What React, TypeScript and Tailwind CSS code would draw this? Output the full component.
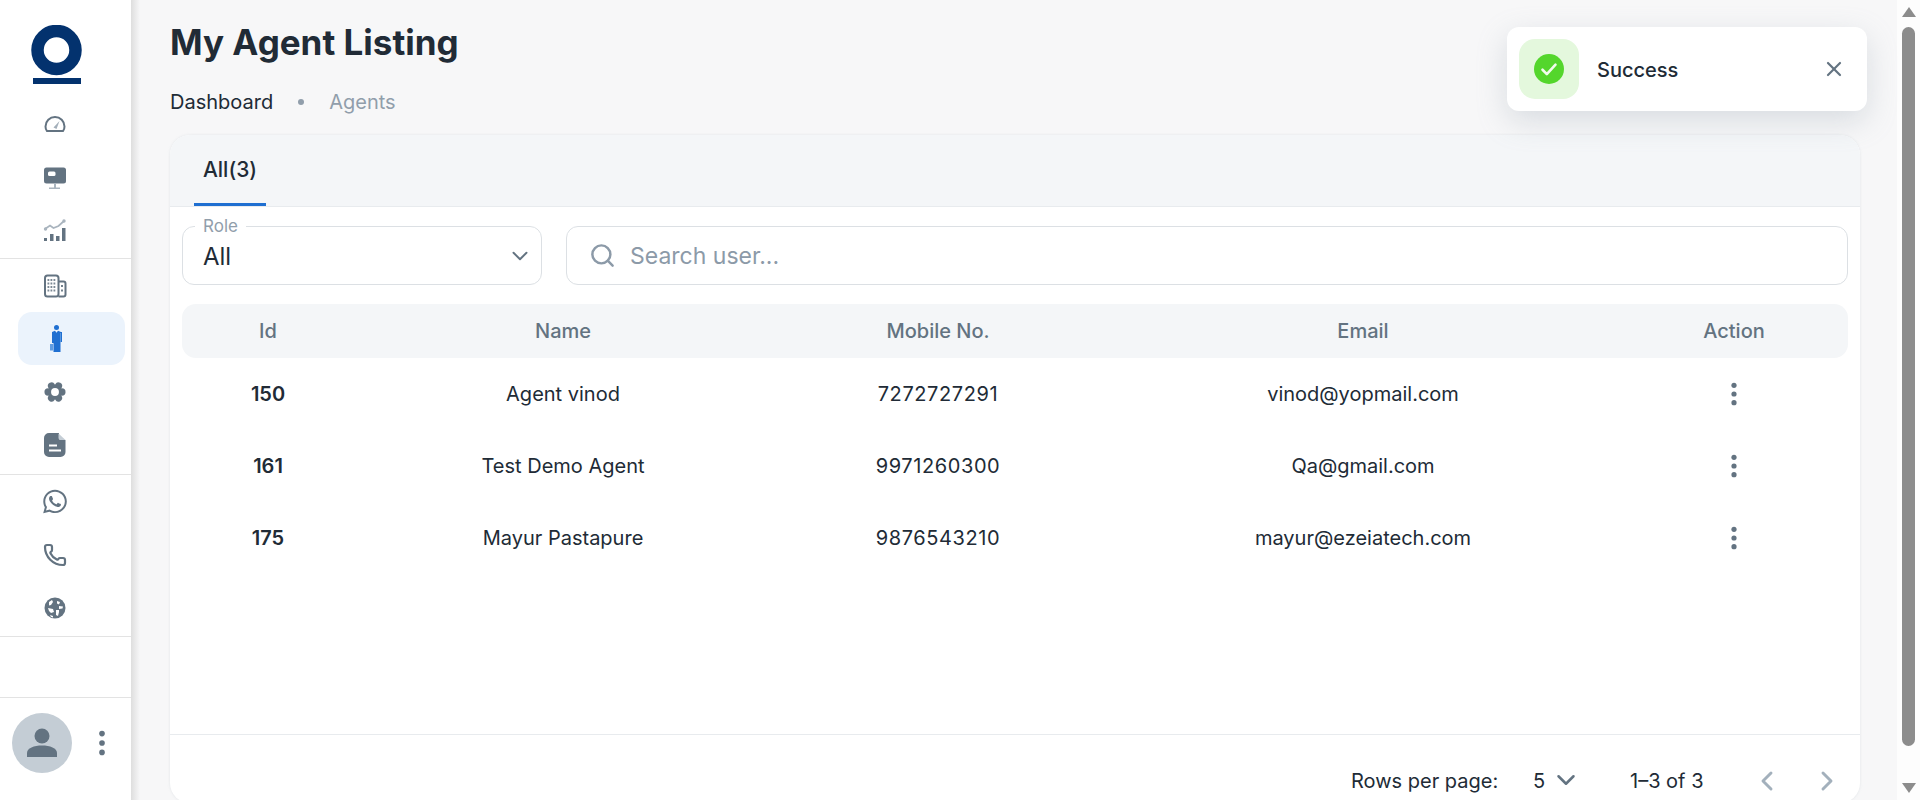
import { ChevronDown, ChevronLeft, ChevronRight, Phone, Search, X } from 'lucide-react'
import { FaWhatsapp } from 'react-icons/fa'

const rows = [
  { id: 150, name: 'Agent vinod', mobile: '7272727291', email: 'vinod@yopmail.com' },
  { id: 161, name: 'Test Demo Agent', mobile: '9971260300', email: 'Qa@gmail.com' },
  { id: 175, name: 'Mayur Pastapure', mobile: '9876543210', email: 'mayur@ezeiatech.com' },
]

function Logo() {
  return (
    <svg width="52" height="60" viewBox="0 0 52 60">
      <circle cx="25.500" cy="25" r="19" fill="none" stroke="#03326e" strokeWidth="12.500" />
      <rect x="2" y="53" width="48" height="6" fill="#03326e" />
    </svg>
  )
}

function Gauge() {
  return (
    <svg width="24" height="24" viewBox="0 0 24 24">
      <path d="M4 19h16c.8-.9 1.500-2.600 1.500-4.500a9.500 9.500 0 0 0-19 0c0 1.900.7 3.600 1.500 4.500z" fill="none" stroke="#637381" strokeWidth="2" strokeLinejoin="round" />
      <path d="M10.500 15.500l6-6.500-3 8z" fill="#a3afba" />
    </svg>
  )
}

function Monitor() {
  return (
    <svg width="24" height="24" viewBox="0 0 24 24">
      <rect x="1" y="2.500" width="22" height="16" rx="2.500" fill="#637381" />
      <rect x="5" y="6.500" width="7.500" height="4.500" rx="1.500" fill="#fff" />
      <path d="M11 18.500h2v4h4V24H6v-1.500h5z" fill="#a9b4be" />
    </svg>
  )
}

function ChartUp() {
  return (
    <svg width="24" height="24" viewBox="0 0 24 24">
      <path d="M2 11l5-3.500 3.500 2.500L15.500 8l6-5.500" fill="none" stroke="#a9b4be" strokeWidth="1.700" />
      <circle cx="2.500" cy="11" r="1.700" fill="#a9b4be" />
      <circle cx="21" cy="3" r="1.700" fill="#a9b4be" />
      <rect x="1" y="20" width="3" height="3" fill="#637381" />
      <rect x="7" y="16" width="3.500" height="7" fill="#637381" />
      <rect x="13" y="18" width="3.500" height="5" fill="#637381" />
      <rect x="19" y="10" width="3.500" height="13" fill="#637381" />
    </svg>
  )
}

function Building() {
  return (
    <svg width="24" height="24" viewBox="0 0 24 24">
      <rect x="2" y="1.500" width="13.500" height="21" rx="2.500" fill="none" stroke="#637381" strokeWidth="2" />
      <path d="M15.500 7.500h5a2 2 0 0 1 2 2v11a2 2 0 0 1-2 2h-5" fill="none" stroke="#637381" strokeWidth="2" />
      <path d="M4.500 6h8.500M4.500 9.500h8.500M4.500 13h8.500M4.500 16.500h8.500" stroke="#7b8894" strokeWidth="1.800" strokeDasharray="1.800 1.200" />
      <path d="M19 11v2M19 15.500v2" stroke="#637381" strokeWidth="1.800" />
    </svg>
  )
}

function AgentIcon() {
  return (
    <svg width="12" height="27" viewBox="0 0 12 27" className="ml-[2px]">
      <circle cx="6.500" cy="2.500" r="2.500" fill="#1f6fd1" />
      <path d="M2 7l3-1.200 1.500 2 1.500-2L11 7h1v10h-1.500v10h-7V18H2z" fill="#1f6fd1" />
      <path d="M10.500 8v9" stroke="#6fa6e6" strokeWidth=".7" />
      <rect x="0" y="19" width="3" height="6.500" fill="#5f9ce2" />
    </svg>
  )
}

function Gear() {
  const petals = [30, 90, 150, 210, 270, 330]
  return (
    <svg width="22" height="22" viewBox="0 0 24 24">
      {petals.map((deg) => (
        <circle key={deg} cx="12" cy="4.500" r="4" fill="#637381" transform={`rotate(${deg} 12 12)`} />
      ))}
      <circle cx="12" cy="12" r="7.500" fill="#637381" />
      <circle cx="12" cy="12" r="4.300" fill="#fff" />
    </svg>
  )
}

function Doc() {
  return (
    <svg width="22" height="24" viewBox="0 0 22 24">
      <path d="M5 0h10v5a2 2 0 0 0 2 2h4.500v12a5 5 0 0 1-5 5H5a5 5 0 0 1-5-5V5a5 5 0 0 1 5-5z" fill="#637381" />
      <path d="M14.500 .5l7 6.500h-5a2 2 0 0 1-2-2z" fill="#c4cdd5" />
      <rect x="5" y="11.500" width="8" height="2" fill="#fff" />
      <rect x="5" y="16.500" width="12" height="2" fill="#fff" />
    </svg>
  )
}

function Globe() {
  return (
    <svg width="22" height="22" viewBox="0 0 22 22">
      <circle cx="11" cy="11" r="10.500" fill="#637381" />
      <path d="M5 5l3-2 1 2-2 3-2 .5zM13 4l3 1-1 2.500-2-1zM15 9l4 .5-.5 2-3.500.5zM4 11l5 1 1 3-3 1-2-2zM12 13h3v2l-1 4-2-1zM6 18l3 1v1.500L7 20z" fill="#fff" />
    </svg>
  )
}

function Dots({ size = 'small' }: { size?: 'small' | 'big' }) {
  return (
    <svg width={size === 'big' ? 8 : 6} height={size === 'big' ? 26 : 24} viewBox="0 0 6 24">
      <circle cx="3" cy="3.300" r="2.600" fill="#637381" />
      <circle cx="3" cy="12" r="2.600" fill="#637381" />
      <circle cx="3" cy="20.700" r="2.600" fill="#637381" />
    </svg>
  )
}

function NavItem({ children, active }: { children: React.ReactNode; active?: boolean }) {
  return (
    <div className={`flex h-[53px] w-[107px] items-center rounded-[14px] pl-[25px] ${active ? 'bg-[#ebf3fc]' : ''}`}>
      <div className="flex w-[24px] justify-center">{children}</div>
    </div>
  )
}

function Sidebar() {
  return (
    <aside className="flex h-[800px] w-[131px] shrink-0 flex-col bg-white">
      <div className="h-[97px] pl-[31px] pt-[25px]">
        <Logo />
      </div>
      <div className="flex h-[162px] flex-col border-b border-[#e3e3e3] pl-[18px]">
        <NavItem><Gauge /></NavItem>
        <NavItem><Monitor /></NavItem>
        <NavItem><ChartUp /></NavItem>
      </div>
      <div className="flex h-[215px] flex-col pl-[18px]">
        <NavItem><Building /></NavItem>
        <NavItem active><AgentIcon /></NavItem>
        <NavItem><Gear /></NavItem>
        <NavItem><Doc /></NavItem>
      </div>
      <div className="flex h-[163px] flex-col border-t border-b border-[#e3e3e3] pl-[18px]">
        <NavItem><FaWhatsapp size={27} color="#637381" /></NavItem>
        <NavItem><Phone size={24} color="#637381" strokeWidth={2.2} /></NavItem>
        <NavItem><Globe /></NavItem>
      </div>
      <div className="h-[61px] border-b border-[#e3e3e3]" />
      <div className="flex items-center pl-[12px] pt-[15px]">
        <div className="flex h-[60px] w-[60px] items-center justify-center rounded-full bg-[#c4cdd5]">
          <svg width="32" height="32" viewBox="0 0 32 32">
            <circle cx="16" cy="9" r="7.500" fill="#637381" />
            <path d="M1 30v-4c0-5 7-7.500 15-7.500S31 21 31 26v4z" fill="#637381" />
          </svg>
        </div>
        <div className="ml-[26px]">
          <Dots size="big" />
        </div>
      </div>
    </aside>
  )
}

function Toast() {
  return (
    <div className="absolute left-[1507px] top-[27px] flex h-[84px] w-[360px] items-center rounded-[12px] bg-white pl-[12px] pr-[21px] shadow-[0_10px_30px_rgba(145,158,171,0.3)]">
      <div className="flex h-[60px] w-[60px] items-center justify-center rounded-[16px] bg-[#e4f8dd]">
        <div className="flex h-[30px] w-[30px] items-center justify-center rounded-full bg-[#54d62c]">
          <svg width="26" height="26" viewBox="0 0 18 18">
            <path d="M4.500 9.500l3 3 6-6.500" fill="none" stroke="#f1fcec" strokeWidth="1.800" strokeLinecap="round" strokeLinejoin="round" />
          </svg>
        </div>
      </div>
      <span className="ml-[18px] mt-[1px] flex-1 text-[20px] font-medium text-[#212b36]">Success</span>
      <X size={24} color="#637381" strokeWidth={2.2} />
    </div>
  )
}

export default function App() {
  return (
    <div className="relative flex h-[800px] overflow-hidden bg-[#f7f7f8] font-['Inter','Noto_Sans',sans-serif] text-[#212b36]">
      <Sidebar />
      <div className="h-full w-[9px] shrink-0 bg-gradient-to-r from-[#dedede] to-[#f7f7f8]" />

      <main className="flex w-[1720px] shrink-0 flex-col pl-[30px]">
        <h1 className="mt-[19px] h-[46px] text-[35px] leading-[46px] font-bold whitespace-nowrap">My Agent Listing</h1>
        <div className="mt-[25px] flex h-[24px] items-center text-[20px] leading-[24px]">
          <span>Dashboard</span>
          <span className="mx-[25px] h-[6px] w-[6px] rounded-full bg-[#919eab]" />
          <span className="text-[#919eab]">Agents</span>
        </div>

        <div className="mt-[21px] flex h-[668px] w-[1690px] shrink-0 flex-col overflow-hidden rounded-[20px] bg-white shadow-[0_0_3px_rgba(145,158,171,0.2)]">
          <div className="flex h-[72px] shrink-0 items-end border-b border-[#e8ebee] bg-[#f4f6f8] pl-[24px]">
            <div className="flex h-[72px] w-[72px] items-center justify-center border-b-[3px] border-[#1f6fd1] pt-[2px] text-[21px] font-medium whitespace-nowrap">
              All(3)
            </div>
          </div>

          <div className="mt-[19px] flex gap-[24px] px-[12px]">
            <div className="relative flex h-[59px] w-[360px] items-center justify-between rounded-[12px] border border-[#dce0e4] pl-[20px] pr-[8px]">
              <span className="absolute -top-[12px] left-[12px] bg-white px-[8px] text-[17px] leading-[22px] text-[#919eab]">Role</span>
              <span className="mt-[2px] text-[24px]">All</span>
              <ChevronDown size={26} color="#637381" strokeWidth={1.800} />
            </div>
            <div className="flex h-[59px] flex-1 items-center rounded-[12px] border border-[#dce0e4] pl-[22px]">
              <Search size={27} color="#8c9aa8" strokeWidth={2.200} />
              <span className="ml-[14px] mt-[2px] text-[23px] text-[#8c9aa8]">Search user...</span>
            </div>
          </div>

          <div className="mx-[12px] mt-[19px] grid h-[54px] shrink-0 grid-cols-[172px_418px_332px_518px_224px] items-center rounded-[14px] bg-[#f4f6f8] text-center text-[20px] font-medium text-[#637381]">
            <div>Id</div>
            <div>Name</div>
            <div>Mobile No.</div>
            <div>Email</div>
            <div>Action</div>
          </div>

          <div className="flex-1">
            {rows.map((row) => (
              <div key={row.id} className="mx-[12px] grid h-[72px] grid-cols-[172px_418px_332px_518px_224px] items-center text-center text-[20px]">
                <div className="font-semibold">{row.id}</div>
                <div>{row.name}</div>
                <div className="tracking-[0.6px]">{row.mobile}</div>
                <div>{row.email}</div>
                <div className="flex justify-center"><Dots /></div>
              </div>
            ))}
          </div>

          <div className="flex h-[69px] shrink-0 items-start border-t border-[#e8ebee] pt-[33px] pl-[1181px] text-[20px] leading-[26px]">
            <span className="w-[182px] whitespace-nowrap">Rows per page:</span>
            <span className="w-[13px]">5</span>
            <ChevronDown size={30} color="#637381" strokeWidth={2} className="ml-[5px] -mt-[3px]" />
            <span className="ml-[49px] w-[100px] whitespace-nowrap">1–3 of 3</span>
            <ChevronLeft size={32} color="#a3b0bc" strokeWidth={2.200} className="ml-[21px] -mt-[3px]" />
            <ChevronRight size={32} color="#a3b0bc" strokeWidth={2.200} className="ml-[28px] -mt-[3px]" />
          </div>
        </div>
      </main>

      <div className="ml-[37px] flex w-[23px] shrink-0 flex-col items-center bg-[#fdfdfd]">
        <div className="flex h-[27px] w-full items-start justify-center pt-[7px]">
          <div className="h-0 w-0 border-x-[7px] border-b-[10px] border-x-transparent border-b-[#8c8c8c]" />
        </div>
        <div className="h-[719px] w-[13px] rounded-full bg-[#8c8c8c]" />
        <div className="flex w-full flex-1 items-start justify-center pt-[37px]">
          <div className="h-0 w-0 border-x-[7px] border-t-[10px] border-x-transparent border-t-[#8c8c8c]" />
        </div>
      </div>

      <Toast />
    </div>
  )
}
